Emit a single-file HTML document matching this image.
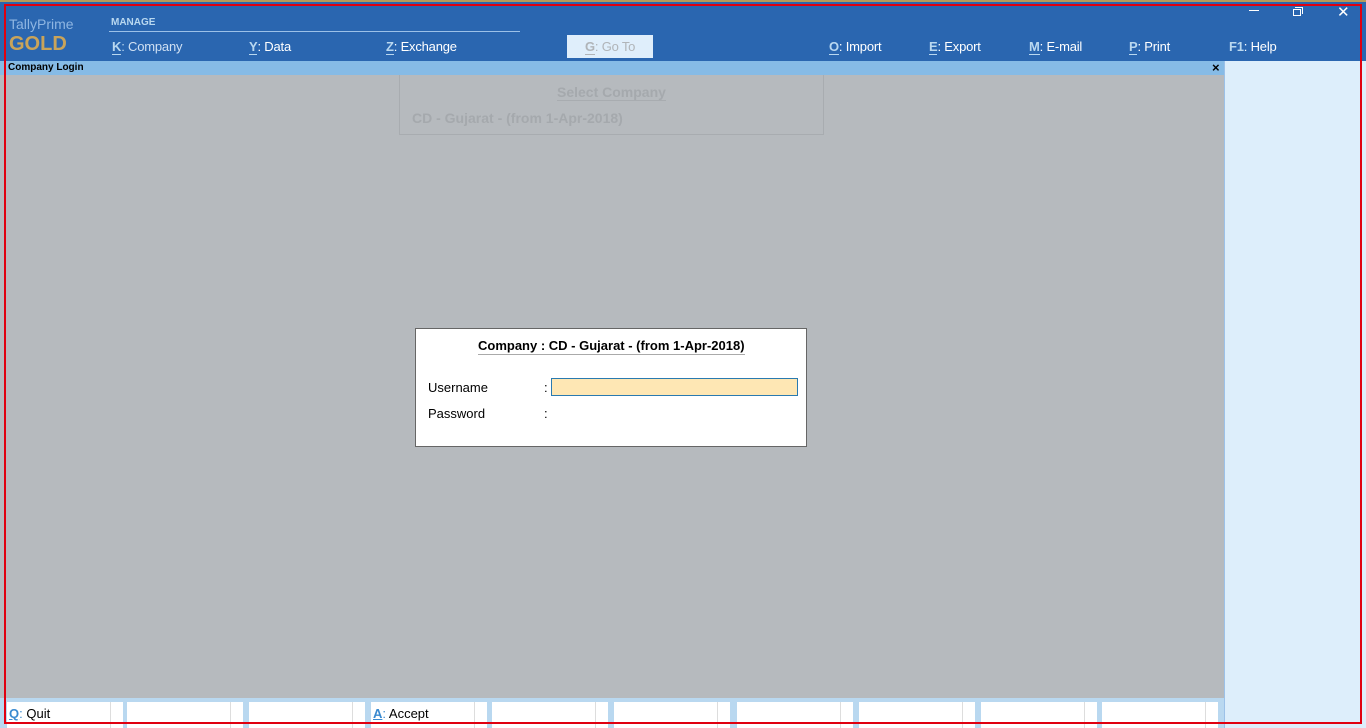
<!DOCTYPE html>
<html><head><meta charset="utf-8"><style>
*{margin:0;padding:0;box-sizing:border-box}
body{width:1366px;height:728px;overflow:hidden;position:relative;font-family:"Liberation Sans",sans-serif;background:#b6babe}
.a{position:absolute}
.hdr{left:0;top:0;width:1366px;height:61px;background:#2a66b0}
.m{top:39px;font-size:13px;color:#fff;letter-spacing:-0.2px}
.m u{text-decoration:none;border-bottom:1px solid #b9d8f0;color:#b9d8f0;font-weight:bold}
.fb{top:702px;height:26px;width:116px;background:#fff;font-size:13px;padding:4px 0 0 2px}
.fb i{position:absolute;left:103px;top:0;width:1px;height:26px;background:#ddd}
</style></head><body>
<div class="a hdr"></div>
<div class="a" style="left:0;top:0;width:1366px;height:2px;background:#b79a5a"></div>
<div class="a" style="left:9px;top:16px;font-size:14px;color:#8fb6e2">TallyPrime</div>
<div class="a" style="left:9px;top:33px;font-size:20px;font-weight:bold;color:#c9a45a">GOLD</div>
<div class="a" style="left:111px;top:17px;font-size:10px;font-weight:bold;color:#b9d8f0">MANAGE</div>
<div class="a" style="left:109px;top:31px;width:411px;height:1px;background:#9cc1e8"></div>
<div class="a m" style="left:112px"><u>K</u><span style="color:#b9d8f0">:</span> <span style="color:#cfe0f3">Company</span></div>
<div class="a m" style="left:249px"><u>Y</u>: Data</div>
<div class="a m" style="left:386px"><u>Z</u>: Exchange</div>
<div class="a" style="left:567px;top:35px;width:86px;height:23px;background:#dfeefb"></div>
<div class="a m" style="left:585px;color:#b0b4b8"><u style="color:#b0b4b8;border-color:#b0b4b8">G</u>: Go To</div>
<div class="a m" style="left:829px"><u>O</u>: Import</div>
<div class="a m" style="left:929px"><u>E</u>: Export</div>
<div class="a m" style="left:1029px"><u>M</u>: E-mail</div>
<div class="a m" style="left:1129px"><u>P</u>: Print</div>
<div class="a m" style="left:1229px"><u style="border:none">F1</u>: Help</div>
<div class="a" style="left:1249px;top:10px;width:10px;height:1px;background:#fff"></div>
<div class="a" style="left:1293px;top:9px;width:8px;height:7px;border:1px solid #fff"></div>
<div class="a" style="left:1295px;top:7px;width:8px;height:7px;border-top:1px solid #fff;border-right:1px solid #fff"></div>
<div class="a" style="left:1337px;top:3px;font-size:15px;color:#fff">✕</div>
<div class="a" style="left:0;top:61px;width:1224px;height:14px;background:#86bbe6"></div>
<div class="a" style="left:8px;top:62px;font-size:10px;font-weight:bold">Company Login</div>
<div class="a" style="left:1212px;top:60px;font-size:13px;font-weight:bold">×</div>
<div class="a" style="left:1224px;top:61px;width:142px;height:667px;background:#ddeefb;border-left:1px solid #9cc1e8"></div>
<div class="a" style="left:399px;top:75px;width:425px;height:60px;border:1px solid #a8acb0;border-top:none"></div>
<div class="a" style="left:557px;top:84px;font-size:14px;font-weight:bold;color:#a5a9ad;border-bottom:1px solid #a8acb0">Select Company</div>
<div class="a" style="left:412px;top:110px;font-size:14px;font-weight:bold;color:#a5a9ad">CD - Gujarat - (from 1-Apr-2018)</div>
<div class="a" style="left:415px;top:328px;width:392px;height:119px;background:#fff;border:1px solid #666"></div>
<div class="a" style="left:478px;top:338px;font-size:13px;font-weight:bold;border-bottom:1px solid #aaa;padding-bottom:1px">Company : CD - Gujarat - (from 1-Apr-2018)</div>
<div class="a" style="left:428px;top:380px;font-size:13px">Username</div>
<div class="a" style="left:544px;top:380px;font-size:13px">:</div>
<div class="a" style="left:551px;top:378px;width:247px;height:18px;background:#fee7b4;border:1px solid #2a7ab0"></div>
<div class="a" style="left:428px;top:406px;font-size:13px">Password</div>
<div class="a" style="left:544px;top:406px;font-size:13px">:</div>
<div class="a" style="left:0;top:698px;width:1224px;height:30px;background:#b9d8f0"></div>
<div class="a fb" style="left:7px"><span style="color:#3a8ad0;font-weight:bold;text-decoration:underline">Q</span><span style="color:#3a8ad0">:</span> Quit<i></i></div>
<div class="a fb" style="left:127px"><i></i></div>
<div class="a fb" style="left:249px"><i></i></div>
<div class="a fb" style="left:371px"><span style="color:#3a8ad0;font-weight:bold;text-decoration:underline">A</span><span style="color:#3a8ad0">:</span> Accept<i></i></div>
<div class="a fb" style="left:492px"><i></i></div>
<div class="a fb" style="left:614px"><i></i></div>
<div class="a fb" style="left:737px"><i></i></div>
<div class="a fb" style="left:859px"><i></i></div>
<div class="a fb" style="left:981px"><i></i></div>
<div class="a fb" style="left:1102px"><i></i></div>
<div class="a" style="left:4px;top:4px;width:1358px;height:720px;border:2px solid #e00010"></div>
</body></html>
